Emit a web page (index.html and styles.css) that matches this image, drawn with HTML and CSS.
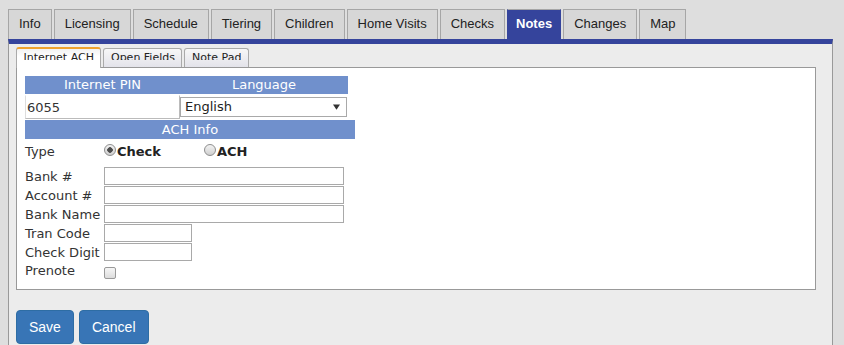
FILE: index.html
```html
<!DOCTYPE html>
<html lang="en">
<head>
    <meta charset="UTF-8">
    <meta name="viewport" content="width=device-width, initial-scale=1.0">
    <title>Provider - Notes</title>
    <link rel="stylesheet" href="styles.css">
</head>
<body>
    <nav class="tabs">
        <a href="#" class="tab">Info</a>
        <a href="#" class="tab">Licensing</a>
        <a href="#" class="tab">Schedule</a>
        <a href="#" class="tab">Tiering</a>
        <a href="#" class="tab">Children</a>
        <a href="#" class="tab">Home Visits</a>
        <a href="#" class="tab">Checks</a>
        <a href="#" class="tab tab-active">Notes</a>
        <a href="#" class="tab">Changes</a>
        <a href="#" class="tab">Map</a>
    </nav>

    <div class="panel">
        <div class="subtabs">
            <a href="#" class="subtab subtab-active"><span>Internet ACH</span></a>
            <a href="#" class="subtab"><span>Open Fields</span></a>
            <a href="#" class="subtab"><span>Note Pad</span></a>
        </div>

        <div class="box">
            <div class="pin-grid">
                <div class="head">Internet PIN</div>
                <div class="head">Language</div>
                <input type="text" class="pin-input" value="6055">
                <div class="select-wrap">
                    <select class="lang-select">
                        <option>English</option>
                        <option>Spanish</option>
                    </select>
                    <svg class="select-arrow" width="8" height="6" viewBox="0 0 8 6"><path d="M0 0h8L4 6z" fill="#333"/></svg>
                </div>
            </div>

            <div class="head head-ach">ACH Info</div>

            <div class="form-row type-row">
                <span class="label">Type</span>
                <label class="opt"><input type="radio" name="type" checked>Check</label>
                <label class="opt"><input type="radio" name="type">ACH</label>
            </div>
            <div class="form-row">
                <span class="label">Bank #</span>
                <input type="text" class="field field-wide">
            </div>
            <div class="form-row">
                <span class="label">Account #</span>
                <input type="text" class="field field-wide">
            </div>
            <div class="form-row">
                <span class="label">Bank Name</span>
                <input type="text" class="field field-wide">
            </div>
            <div class="form-row">
                <span class="label">Tran Code</span>
                <input type="text" class="field field-short">
            </div>
            <div class="form-row">
                <span class="label">Check Digit</span>
                <input type="text" class="field field-short">
            </div>
            <div class="form-row prenote-row">
                <span class="label">Prenote</span>
                <input type="checkbox" class="check">
            </div>
        </div>

        <div class="actions">
            <button class="btn">Save</button>
            <button class="btn">Cancel</button>
        </div>
    </div>
</body>
</html>
```

FILE: styles.css
```css
:root {
    --page-gray: #dedede;
    --panel-gray: #ececec;
    --tab-gray: #d7d7d7;
    --border-gray: #a6a6a6;
    --notes-blue: #35449c;
    --head-blue: #7090cc;
    --btn-blue: #3875b6;
    --text-dark: #333333;
}

* {
    box-sizing: border-box;
}

body {
    margin: 9px 8px 0;
    background-color: var(--page-gray);
    font-family: 'DejaVu Sans', Verdana, sans-serif;
    font-size: 13px;
    color: var(--text-dark);
}

.tabs {
    display: flex;
    gap: 2px;
    align-items: flex-end;
}

.tab {
    height: 30px;
    padding: 0 10px;
    line-height: 28px;
    background-color: var(--tab-gray);
    border: 1px solid var(--border-gray);
    border-bottom: none;
    font-family: 'Liberation Sans', Arial, sans-serif;
    font-size: 13px;
    color: #222;
    text-decoration: none;
}

.tab-active {
    background-color: var(--notes-blue);
    border-left-color: var(--notes-blue);
    border-right-color: var(--notes-blue);
    color: white;
    font-weight: bold;
    padding: 0 8px;
}

.panel {
    width: 825px;
    min-height: 320px;
    padding: 3px 0 20px 7px;
    background-color: var(--panel-gray);
    border-top: 5px solid var(--notes-blue);
    border-left: 1px solid #999;
    border-right: 1px solid #999;
}

.subtabs {
    display: flex;
    gap: 2px;
    align-items: flex-end;
}

.subtab {
    height: 19px;
    padding: 2px 6.5px 0;
    background: linear-gradient(#f7f7f7, #e3e3ea);
    border: 1px solid #aaa;
    border-bottom: none;
    border-radius: 3px 3px 0 0;
    font-size: 11px;
    color: #222;
    text-decoration: none;
}

.subtab span {
    display: block;
    height: 9px;
    line-height: 13px;
    overflow: hidden;
}

.subtab-active {
    height: 21px;
    margin-bottom: -1px;
    position: relative;
    z-index: 1;
    background: linear-gradient(#f2f2f2, #ffffff 40%);
    border-top: 2px solid #f0a22e;
    border-color: #f0a22e #aaa #aaa;
}

.box {
    width: 800px;
    padding: 8px;
    background-color: white;
    border: 1px solid #999;
}

.pin-grid {
    display: grid;
    grid-template-columns: 155px 168px;
    grid-template-rows: 18px 25px;
    align-items: center;
    width: 323px;
}

.head {
    height: 18px;
    line-height: 18px;
    background-color: var(--head-blue);
    color: white;
    text-align: center;
}

.head-ach {
    width: 330px;
    height: 19px;
    margin-top: 1px;
    line-height: 19px;
}

.pin-input {
    width: 155px;
    height: 24px;
    margin: 1px 0 0;
    padding: 0 1px;
    border: 1px solid #bbb;
    border-top-color: white;
    border-left-color: #ddd;
    font-family: inherit;
    font-size: 13px;
    color: var(--text-dark);
}

.select-wrap {
    position: relative;
    width: 167px;
    height: 20px;
}

.lang-select {
    appearance: none;
    width: 100%;
    height: 20px;
    margin: 0;
    padding: 0 4px;
    background: white;
    border: 1px solid #a9a9a9;
    border-radius: 0;
    font-family: inherit;
    font-size: 13px;
    color: #222;
}

.select-arrow {
    position: absolute;
    right: 7px;
    top: 7px;
    width: 7px;
    height: 6px;
}

.form-row {
    display: flex;
    align-items: flex-start;
    height: 19px;
}

.label {
    width: 79px;
    line-height: 19px;
    white-space: nowrap;
}

.type-row {
    height: 28px;
    padding-top: 5px;
}

.type-row .label {
    line-height: 16px;
}

.opt {
    display: flex;
    align-items: flex-start;
    width: 100px;
    line-height: 16px;
    font-weight: bold;
    color: #222;
}

.opt input {
    appearance: none;
    width: 12px;
    height: 12px;
    margin: 0 1px 0 0;
    border: 1px solid #8e8e8e;
    border-radius: 50%;
    background: linear-gradient(#f3f3f3, #cfcfcf);
}

.opt input:checked {
    background: radial-gradient(circle, #4d4d4d 0 2.5px, transparent 3px), linear-gradient(#f3f3f3, #cfcfcf);
}

.field {
    height: 18px;
    margin: 0;
    padding: 0 2px;
    border: 1px solid #a9a9a9;
    font-family: inherit;
    font-size: 13px;
}

.field-wide {
    width: 240px;
}

.field-short {
    width: 88px;
}

.prenote-row .label {
    line-height: 17px;
}

.check {
    appearance: none;
    width: 12px;
    height: 12px;
    margin: 5px 0 0;
    border: 1px solid #999;
    border-radius: 2px;
    background: linear-gradient(#f6f6f6, #dcdcdc);
}

.actions {
    display: flex;
    gap: 5px;
    margin-top: 20px;
}

.btn {
    padding: 6px 12px;
    background-color: var(--btn-blue);
    border: 1px solid #2e6da4;
    border-radius: 4px;
    font-family: 'Liberation Sans', Arial, sans-serif;
    font-size: 14px;
    line-height: 20px;
    color: white;
    cursor: pointer;
}
```
